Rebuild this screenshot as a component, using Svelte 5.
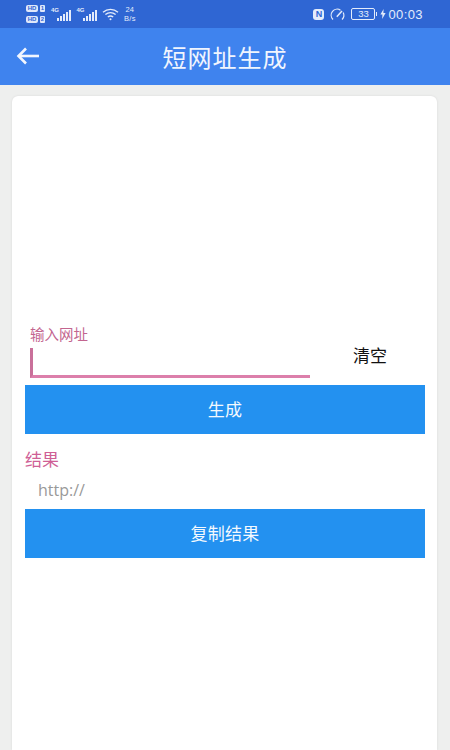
<script>
  // Signal strength bars for the two SIM slots
  const bars = [3, 5, 7, 9, 11];
  let url = $state("");
</script>

<div class="page">
  <div class="status">
    <div class="status-left">
      <div class="sims">
        <div class="sim"><span class="hd">HD</span><span class="num">1</span></div>
        <div class="sim"><span class="hd">HD</span><span class="num">2</span></div>
      </div>
      {#each [0, 1] as s}
        <div class="signal">
          <span class="g">4G</span>
          <div class="bars">
            {#each bars as h}
              <i style="height: {h}px"></i>
            {/each}
          </div>
        </div>
      {/each}
      <svg class="wifi" width="17" height="13" viewBox="0 0 17 13" fill="none" stroke="#e4ecfb" stroke-width="1.3">
        <path d="M1 4.2C5.4.4 11.6.4 16 4.2" />
        <path d="M3.4 6.6c3-2.5 7.2-2.5 10.2 0" />
        <path d="M5.8 9c1.6-1.2 3.8-1.2 5.4 0" />
        <circle cx="8.5" cy="11.2" r="1" fill="#e4ecfb" stroke="none" />
      </svg>
      <div class="speed"><span>24</span><span>B/s</span></div>
    </div>
    <div class="status-right">
      <span class="nfc">N</span>
      <svg width="16" height="13" viewBox="0 0 16 13" fill="none" stroke="#e4ecfb" stroke-width="1.2">
        <path d="M3 11.5A6 6 0 0 1 10.5 2.2" />
        <path d="M13.2 4.5A6 6 0 0 1 12 11.5" />
        <path d="M6.8 8.8 12 3" stroke-width="1.5" />
      </svg>
      <div class="battery"><span>33</span></div>
      <svg width="6" height="10" viewBox="0 0 6 10"><path d="M3.6 0 .4 5.6h2L2.2 10l3.4-6H3.4z" fill="#e4ecfb" /></svg>
      <span class="clock">00:03</span>
    </div>
  </div>

  <header class="bar">
    <svg class="back" width="24" height="20" viewBox="0 0 24 20" fill="none" stroke="#f2f6fe" stroke-width="2.6">
      <path d="M23 10H3" />
      <path d="M10 2.5 2.5 10l7.5 7.5" />
    </svg>
    <h1>短网址生成</h1>
  </header>

  <main class="card">
    <div class="input-row">
      <div class="field">
        <label for="url">输入网址</label>
        <input id="url" bind:value={url} />
      </div>
      <button class="clear">清空</button>
    </div>
    <button class="action">生成</button>
    <div class="result-label">结果</div>
    <div class="result">http://</div>
    <button class="action">复制结果</button>
  </main>
</div>

<style>
  :global(body) {
    margin: 0;
    background: #eeefee;
  }
  .page {
    height: 750px;
    overflow: hidden;
    display: flex;
    flex-direction: column;
    font-family: "Noto Sans CJK SC", "Liberation Sans", sans-serif;
  }
  .status {
    height: 28px;
    background: #2f66d3;
    display: flex;
    justify-content: space-between;
    align-items: center;
    padding: 0 27px 0 26px;
    color: #e4ecfb;
    font-family: "Liberation Sans", sans-serif;
  }
  .status-left,
  .status-right {
    display: flex;
    align-items: center;
  }
  .sims {
    display: flex;
    flex-direction: column;
    gap: 4px;
    margin-right: 5px;
  }
  .sim {
    display: flex;
    gap: 2px;
  }
  .hd {
    width: 12px;
    height: 7px;
    border-radius: 2px;
    background: #dfe8fa;
    color: #2f66d3;
    font-size: 6px;
    line-height: 7px;
    font-weight: 700;
    text-align: center;
  }
  .num {
    width: 5px;
    height: 7px;
    border-radius: 1px;
    background: #dfe8fa;
    color: #2f66d3;
    font-size: 6px;
    line-height: 7px;
    font-weight: 700;
    text-align: center;
  }
  .signal {
    position: relative;
    width: 25px;
    height: 14px;
    margin-right: 0.5px;
  }
  .g {
    position: absolute;
    left: 1px;
    top: 0;
    font-size: 6px;
    line-height: 6px;
    font-weight: 700;
  }
  .bars {
    position: absolute;
    right: 4px;
    bottom: 0;
    display: flex;
    align-items: flex-end;
    gap: 1px;
  }
  .bars i {
    width: 2px;
    background: #e4ecfb;
  }
  .wifi {
    margin: 0 5px 0 1px;
  }
  .speed {
    display: flex;
    flex-direction: column;
    align-items: center;
    font-size: 7.5px;
    line-height: 9px;
    letter-spacing: 0.3px;
  }
  .nfc {
    width: 11px;
    height: 11px;
    border-radius: 3px;
    background: #e4ecfb;
    color: #2f66d3;
    font-size: 9px;
    line-height: 11px;
    font-weight: 700;
    text-align: center;
    margin-right: 6px;
  }
  .battery {
    position: relative;
    width: 22px;
    height: 10px;
    margin: 0 5px 0 5px;
    border: 1px solid #e4ecfb;
    border-radius: 2px;
    font-size: 9.5px;
    line-height: 10px;
    text-align: center;
  }
  .battery::after {
    content: "";
    position: absolute;
    right: -3px;
    top: 3px;
    width: 1.5px;
    height: 4px;
    background: #e4ecfb;
  }
  .clock {
    margin-left: 2px;
    font-size: 13px;
    letter-spacing: 0.4px;
  }
  .bar {
    height: 57px;
    background: #3f83ee;
    display: flex;
    align-items: center;
    justify-content: center;
    position: relative;
  }
  .back {
    position: absolute;
    left: 16px;
    top: 18px;
  }
  h1 {
    margin: 0;
    font-size: 24px;
    font-weight: 400;
    letter-spacing: 1px;
    color: #f0f5fe;
  }
  .card {
    flex: 1;
    margin: 11px 13px 0 12px;
    padding: 230px 12px 0 13px;
    background: #fff;
    border-radius: 6px 6px 0 0;
    box-shadow: 0 0 2px #d4d4d4;
  }
  .input-row {
    display: flex;
    align-items: flex-start;
    height: 59px;
  }
  .field {
    width: 280px;
    margin-left: 5px;
    display: flex;
    flex-direction: column;
  }
  label {
    font-size: 14.5px;
    line-height: 16px;
    color: #c3658f;
  }
  input {
    box-sizing: border-box;
    width: 100%;
    height: 30px;
    margin-top: 6px;
    padding: 0;
    border: 0;
    border-bottom: 3px solid #dc7fab;
    border-left: 3px solid #c9709a;
    background: none;
    outline: none;
  }
  .clear {
    margin: 17px 0 0 43px;
    padding: 0;
    width: 34px;
    border: 0;
    background: none;
    font-family: inherit;
    font-size: 17px;
    line-height: 24px;
    color: #111;
    white-space: nowrap;
  }
  .action {
    display: block;
    width: 100%;
    height: 49px;
    padding: 0 0 3px;
    border: 0;
    background: #2391f0;
    color: #f4f9fe;
    font-family: inherit;
    font-size: 17px;
    letter-spacing: 0.3px;
  }
  .result-label {
    margin-top: 14px;
    font-size: 17px;
    line-height: 22px;
    color: #cf5f96;
  }
  .result {
    margin-top: 8px;
    height: 31px;
    padding-left: 13px;
    font-family: "Open Sans", "Liberation Sans", sans-serif;
    font-size: 16px;
    line-height: 24px;
    color: #999;
  }
</style>
